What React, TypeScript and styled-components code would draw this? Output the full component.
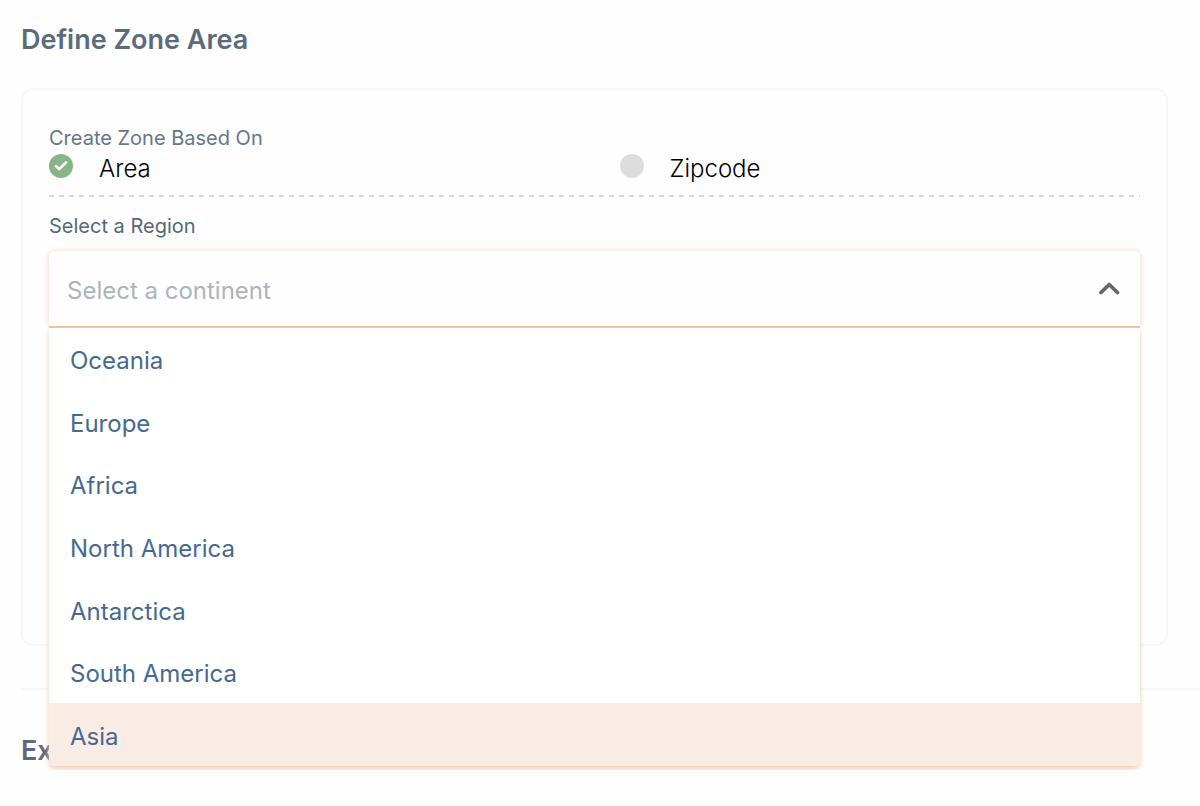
import React, { useState } from "react";
import styled, { createGlobalStyle } from "styled-components";

const GlobalStyle = createGlobalStyle`
  * { box-sizing: border-box; }
  body {
    margin: 0;
    background: #fefefe;
    color: #5b6b7b;
    font-family: Inter, "Liberation Sans", sans-serif;
  }
`;

const Page = styled.main`
  padding: 21px 0 0 21px;
`;

const Heading = styled.h2`
  margin: 0;
  font-size: 27px;
  line-height: 38px;
  font-weight: 600;
  color: #5b6b7b;
`;

const Card = styled.section`
  margin: 29px 32px 0 0;
  min-height: 558px;
  padding: 36px 26px;
  border: 2px solid #f5f6fc;
  border-radius: 12px;
`;

const Group = styled.fieldset`
  margin: 0;
  padding: 0;
  border: 0;
  min-width: 0;
`;

const Legend = styled.legend`
  padding: 0;
  font-size: 20px;
  line-height: 24px;
  font-weight: 400;
  color: #63778a;
`;

const Choices = styled.div`
  display: grid;
  grid-template-columns: 1fr 1fr;
  column-gap: 50px;
  height: 47px;
  background: repeating-linear-gradient(90deg, #cedaf2 0 5px, transparent 5px 10px) left bottom / 100% 2px no-repeat;
`;

const Choice = styled.label`
  display: flex;
  gap: 26px;
  padding-top: 4px;
  font-size: 24px;
  line-height: 30px;
  font-weight: 300;
  color: #000000;
  cursor: pointer;
`;

const Mark = styled.span`
  display: grid;
  width: 24px;
  height: 24px;
  & > * { grid-area: 1 / 1; }
  svg { pointer-events: none; }
`;

const Radio = styled.input`
  appearance: none;
  width: 24px;
  height: 24px;
  margin: 0;
  border-radius: 50%;
  background: #dddddd;
  &:checked { background: #87b587; }
`;

const FieldLabel = styled.label`
  display: block;
  margin: 16px 0 12px;
  font-size: 20px;
  line-height: 26px;
  font-weight: 400;
  color: #54687a;
`;

const Combo = styled.div`
  position: relative;
  border-radius: 6px;
  box-shadow: 0 0 5px 1px #f9dfd0;
`;

const Field = styled.div`
  display: flex;
  align-items: center;
  height: 77px;
  padding: 0 20px 0 18px;
  background: #fefefe;
  border-bottom: 2px solid #f0c0a3;
  border-radius: 6px 6px 0 0;
`;

const Input = styled.input`
  flex: 1;
  min-width: 0;
  padding: 4px 0 0;
  border: 0;
  outline: 0;
  background: transparent;
  font: inherit;
  font-size: 24px;
  line-height: 32px;
  font-weight: 400;
  color: #41648c;
  &::placeholder { color: #adb4bb; opacity: 1; }
`;

const Toggle = styled.button`
  display: flex;
  padding: 0;
  border: 0;
  background: none;
  cursor: pointer;
`;

const Menu = styled.ul`
  position: absolute;
  top: 100%;
  left: 0;
  right: 0;
  display: flex;
  flex-direction: column;
  height: 438px;
  margin: 0;
  padding: 0;
  list-style: none;
  background: #ffffff;
  border-radius: 0 0 6px 6px;
  box-shadow: 0 3px 5px 0 #f3cfb9;
  overflow: hidden;
`;

const Option = styled.li<{ $active: boolean }>`
  flex: 1;
  display: flex;
  align-items: center;
  padding: 4px 21px 0;
  font-size: 24px;
  line-height: 30px;
  font-weight: 400;
  color: #46698f;
  background: ${(p) => (p.$active ? "#f9ece5" : "transparent")};
  cursor: pointer;
`;

const Divider = styled.hr`
  height: 2px;
  margin: 42px 0;
  border: 0;
  background: #f5f6fc;
`;

const continents = ["Oceania", "Europe", "Africa", "North America", "Antarctica", "South America", "Asia"];

export default function App() {
  const [basis, setBasis] = useState("Area");
  const [open, setOpen] = useState(true);
  const [active, setActive] = useState("Asia");
  const [value, setValue] = useState("");

  return (
    <>
      <GlobalStyle />
      <Page>
        <Heading>Define Zone Area</Heading>
        <Card>
          <Group>
            <Legend>Create Zone Based On</Legend>
            <Choices>
              {["Area", "Zipcode"].map((name) => (
                <Choice key={name}>
                  <Mark>
                    <Radio type="radio" name="basis" checked={basis === name} onChange={() => setBasis(name)} />
                    {basis === name && (
                      <svg width="24" height="24" viewBox="0 0 24 24" fill="none" stroke="#fff" strokeWidth="2.6" strokeLinecap="round" strokeLinejoin="round">
                        <path d="M7 12.2 10.3 15.1 17 8.5" />
                      </svg>
                    )}
                  </Mark>
                  {name}
                </Choice>
              ))}
            </Choices>
          </Group>
          <FieldLabel htmlFor="region">Select a Region</FieldLabel>
          <Combo>
            <Field>
              <Input
                id="region"
                role="combobox"
                aria-expanded={open}
                aria-controls="region-list"
                placeholder="Select a continent"
                value={value}
                readOnly
                onClick={() => setOpen(true)}
              />
              <Toggle
                type="button"
                aria-labelledby="region"
                aria-controls="region-list"
                aria-expanded={open}
                onClick={() => setOpen(!open)}
              >
                <svg width="22" height="16" viewBox="0 0 22 16" fill="none" stroke="#666" strokeWidth="3.8" strokeLinecap="round" strokeLinejoin="round">
                  <path d="M3 11.5 11.2 3.5 19.4 11.5" />
                </svg>
              </Toggle>
            </Field>
            {open && (
              <Menu id="region-list" role="listbox">
                {continents.map((name) => (
                  <Option
                    key={name}
                    role="option"
                    aria-selected={name === value}
                    $active={name === active}
                    onMouseEnter={() => setActive(name)}
                    onClick={() => {
                      setValue(name);
                      setOpen(false);
                    }}
                  >
                    {name}
                  </Option>
                ))}
              </Menu>
            )}
          </Combo>
        </Card>
        <Divider />
        <Heading>Ex</Heading>
      </Page>
    </>
  );
}
